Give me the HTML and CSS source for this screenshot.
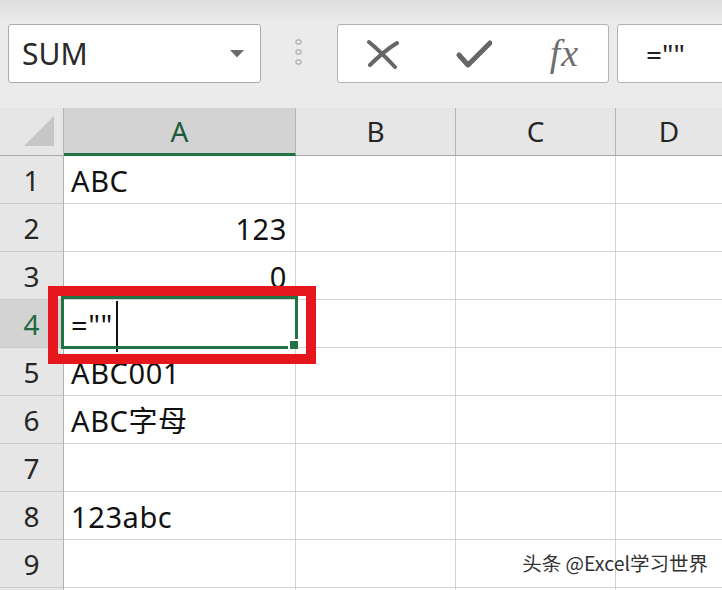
FILE: index.html
```html
<!DOCTYPE html>
<html lang="zh-CN">

<head>
    <meta charset="UTF-8">
    <meta name="viewport" content="width=device-width, initial-scale=1.0">
    <title>SUM</title>
    <link rel="stylesheet" href="styles.css">
</head>

<body>
    <!-- Name box + formula bar -->
    <div class="toolbar">
        <div class="namebox">
            <span>SUM</span>
            <svg width="14" height="8" viewBox="0 0 14 8"><polygon points="0,0 14,0 7,7.5" fill="#6b6b6b"/></svg>
        </div>
        <div class="grip">
            <svg width="7" height="26" viewBox="0 0 7 26">
                <rect x="1" y="1" width="5" height="4" rx="1" fill="none" stroke="#9a9a9a" stroke-width="1"/>
                <rect x="1" y="11" width="5" height="4" rx="1" fill="none" stroke="#9a9a9a" stroke-width="1"/>
                <rect x="1" y="21" width="5" height="4" rx="1" fill="none" stroke="#9a9a9a" stroke-width="1"/>
            </svg>
        </div>
        <div class="fbuttons">
            <svg width="32" height="30" viewBox="0 0 32 30">
                <path d="M2 3 Q14 13 28 28" fill="none" stroke="#666" stroke-width="4" stroke-linecap="round"/>
                <path d="M3 26 Q17 12 30 4" fill="none" stroke="#666" stroke-width="4" stroke-linecap="round"/>
            </svg>
            <svg width="36" height="28" viewBox="0 0 36 28">
                <path d="M3 15 L12 25 L34 3" fill="none" stroke="#666" stroke-width="5" stroke-linejoin="round" stroke-linecap="round"/>
            </svg>
            <span class="fx">fx</span>
        </div>
        <div class="finput">=""</div>
    </div>

    <!-- Worksheet -->
    <div class="sheet">
        <div class="corner"><svg width="30" height="30" viewBox="0 0 30 30"><polygon points="30,0 30,30 0,30" fill="#c6c6c6"/></svg></div>
        <div class="ch active">A</div>
        <div class="ch">B</div>
        <div class="ch">C</div>
        <div class="ch">D</div>

        <div class="rh">1</div><div class="c">ABC</div><div class="c"></div><div class="c"></div><div class="c"></div>
        <div class="rh">2</div><div class="c r">123</div><div class="c"></div><div class="c"></div><div class="c"></div>
        <div class="rh">3</div><div class="c r">0</div><div class="c"></div><div class="c"></div><div class="c"></div>
        <div class="rh active">4</div>
        <div class="c editing">
            <span class="typed">=""</span>
            <div class="selection"><div class="handle"></div></div>
            <div class="mark"></div>
        </div>
        <div class="c"></div><div class="c"></div><div class="c"></div>
        <div class="rh">5</div><div class="c">ABC001</div><div class="c"></div><div class="c"></div><div class="c"></div>
        <div class="rh">6</div><div class="c">ABC字母</div><div class="c"></div><div class="c"></div><div class="c"></div>
        <div class="rh">7</div><div class="c"></div><div class="c"></div><div class="c"></div><div class="c"></div>
        <div class="rh">8</div><div class="c">123abc</div><div class="c"></div><div class="c"></div><div class="c"></div>
        <div class="rh">9</div><div class="c"></div><div class="c"></div><div class="c"></div><div class="c"></div>
        <div class="rh"></div><div class="c"></div><div class="c"></div><div class="c"></div><div class="c"></div>
    </div>

    <div class="watermark">头条 @Excel学习世界</div>
</body>

</html>
```

FILE: styles.css
```css
body {
    margin: 0;
    width: 722px;
    height: 590px;
    overflow: hidden;
    position: relative;
    background: #fff;
    font-family: "Noto Sans", "Noto Sans CJK SC", sans-serif;
    color: #1a1a1a;
}

/* ---- formula bar ---- */
.toolbar {
    height: 108px;
    box-sizing: border-box;
    padding: 24px 0 0 8px;
    display: flex;
    align-items: flex-start;
    background: linear-gradient(#dedede, #ebebeb 22px, #ebebeb);
    white-space: nowrap;
    overflow: hidden;
}

.toolbar > div {
    flex: none;
}

.namebox {
    width: 253px;
    height: 59px;
    box-sizing: border-box;
    padding: 0 16px 0 13px;
    display: flex;
    align-items: center;
    justify-content: space-between;
    background: #fff;
    border: 1px solid #ababab;
    border-radius: 3px;
    font-size: 30px;
    color: #2a2a2a;
    margin-right: 34px;
}

.grip {
    width: 7px;
    margin: 15px 35px 0 0;
}

.fbuttons {
    width: 272px;
    height: 59px;
    box-sizing: border-box;
    display: flex;
    align-items: center;
    justify-content: space-around;
    background: #fff;
    border: 1px solid #b3b3b3;
    border-radius: 3px;
    margin-right: 8px;
}

.fx {
    font-family: "Liberation Serif", serif;
    font-style: italic;
    font-size: 38px;
    letter-spacing: 1px;
    color: #6e6e6e;
    line-height: 1;
    margin-top: -2px;
}

.finput {
    width: 200px;
    height: 59px;
    box-sizing: border-box;
    padding-left: 28px;
    display: flex;
    align-items: center;
    background: #fff;
    border: 1px solid #b3b3b3;
    border-radius: 3px;
    font-size: 28px;
    color: #222;
}

/* ---- grid ---- */
.sheet {
    display: grid;
    grid-template-columns: 64px 232px 160px 160px 106px;
    grid-auto-rows: 48px;
    height: 482px;
    overflow: hidden;
}

.sheet > div {
    box-sizing: border-box;
}

.sheet > div:nth-child(5n) {
    border-right: none;
}

.corner {
    background: #e6e6e6;
    border-right: 1px solid #b5b5b5;
    border-bottom: 1px solid #a8a8a8;
    display: flex;
    justify-content: flex-end;
    align-items: flex-end;
    padding: 0 9px 9px 0;
}

.ch {
    background: #e6e6e6;
    border-right: 1px solid #b5b5b5;
    border-bottom: 1px solid #a8a8a8;
    text-align: center;
    font-size: 28px;
    line-height: 46px;
    color: #262626;
}

.ch.active {
    background: #d3d3d3;
    color: #1d5b39;
    border-bottom: 3px solid #217346;
}

.rh {
    background: #e6e6e6;
    border-right: 1px solid #b0b0b0;
    border-bottom: 1px solid #c9c9c9;
    text-align: center;
    font-size: 28px;
    line-height: 44px;
    padding-top: 2px;
    color: #262626;
}

.rh.active {
    background: #d3d3d3;
    color: #1d6a43;
}

.c {
    border-right: 1px solid #d2d2d2;
    border-bottom: 1px solid #d2d2d2;
    padding: 3px 8px 0 7px;
    font-size: 29px;
    letter-spacing: 0.6px;
    line-height: 44px;
    color: #111;
    white-space: nowrap;
}

.c.r {
    text-align: right;
}

/* active cell in edit mode */
.editing {
    position: relative;
}

.typed {
    position: relative;
}

.typed::after {
    content: "";
    position: absolute;
    right: -5px;
    top: -4px;
    width: 2px;
    height: 51px;
    background: #111;
}

.selection {
    position: absolute;
    left: -3px;
    top: -4px;
    width: 237px;
    height: 53px;
    box-sizing: border-box;
    border: 3px solid #217346;
}

.handle {
    position: absolute;
    right: -3px;
    bottom: -3px;
    width: 8px;
    height: 8px;
    background: #217346;
    box-shadow: -1px -1px 0 1px #fff;
}

.mark {
    position: absolute;
    left: -16px;
    top: -14px;
    width: 268px;
    height: 78px;
    box-sizing: border-box;
    border: 10px solid #e5161c;
}

.watermark {
    position: absolute;
    right: 14px;
    bottom: 15px;
    font-family: "Noto Sans CJK SC", sans-serif;
    font-size: 19.5px;
    letter-spacing: 0;
    line-height: 24px;
    color: #333;
    text-shadow: 0 0 2px #fff, 0 0 1px #fff;
}
```
